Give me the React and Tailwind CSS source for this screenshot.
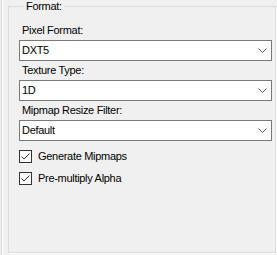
import React from 'react';

const font = { fontFamily: '"Liberation Sans", Arial, sans-serif' };

function Chevron() {
  return (
    <svg width="9" height="5" viewBox="0 0 9 5" className="shrink-0">
      <polyline points="0.5,0.5 4.5,4.5 8.5,0.5" fill="none" stroke="#606060" strokeWidth="1" />
    </svg>
  );
}

function Field({ label, value }) {
  return (
    <div>
      <div className="h-[19px] pt-[3px] pl-[3px] leading-[13px]">{label}</div>
      <div className="h-[21px] bg-white border border-[#7a7a7a] flex items-center justify-between pl-[2px] pr-[4px]">
        <span className="leading-[13px]">{value}</span>
        <Chevron />
      </div>
    </div>
  );
}

function Check({ label }) {
  return (
    <div className="h-[22px] flex items-center gap-[6px]">
      <div className="w-[13px] h-[13px] border border-[#333333] bg-white flex items-center justify-center">
        <svg width="11" height="11" viewBox="0 0 11 11">
          <polyline points="1.5,5.5 4,8 9.5,2.5" fill="none" stroke="#333333" strokeWidth="1" />
        </svg>
      </div>
      <span className="leading-[13px]">{label}</span>
    </div>
  );
}

export default function App() {
  return (
    <div className="w-[277px] h-[255px] bg-[#f0f0f0] text-black text-[11px] tracking-[-0.3px] overflow-hidden flex" style={font}>
      <div className="ml-px w-[2px] h-full border-l border-[#d6d6d6] border-r border-r-white" />
      <fieldset className="ml-[5px] w-[268px] h-[253px] border border-[#dcdcdc] shadow-[1px_1px_0_#ffffff] pl-[10px] pr-[3px]">
        <legend className="ml-[5px] px-[2px] leading-[13px]">Format:</legend>
        <div className="mt-[8px]">
          <Field label="Pixel Format:" value="DXT5" />
          <Field label="Texture Type:" value="1D" />
          <Field label="Mipmap Resize Filter:" value="Default" />
          <div className="pt-[4px]">
            <Check label="Generate Mipmaps" />
            <Check label="Pre-multiply Alpha" />
          </div>
        </div>
      </fieldset>
    </div>
  );
}
